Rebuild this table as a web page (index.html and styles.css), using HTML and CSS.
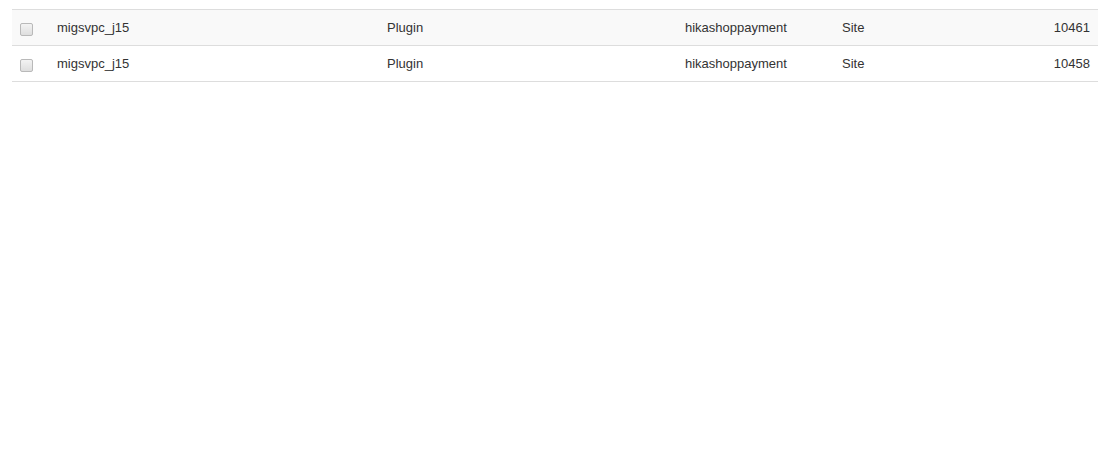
FILE: index.html
```html
<!DOCTYPE html>
<html>
<head>
<meta charset="utf-8">
<link rel="stylesheet" href="styles.css">
</head>
<body>
<div class="wrap">
<table class="list">
<colgroup>
<col class="c-check"><col class="c-name"><col class="c-type"><col class="c-folder"><col class="c-client"><col class="c-id">
</colgroup>
<tbody>
<tr class="ghost"><td><input type="checkbox" class="cb"></td><td></td><td></td><td></td><td></td><td></td></tr>
<tr class="odd"><td><input type="checkbox" class="cb"></td><td>migsvpc_j15</td><td>Plugin</td><td>hikashoppayment</td><td>Site</td><td class="num">10461</td></tr>
<tr><td><input type="checkbox" class="cb"></td><td>migsvpc_j15</td><td>Plugin</td><td>hikashoppayment</td><td>Site</td><td class="num">10458</td></tr>
</tbody>
</table>
</div>
</body>
</html>
```
FILE: styles.css
```css
html, body { margin: 0; padding: 0; background: #fff; }
body { font-family: "Liberation Sans", Arial, sans-serif; font-size: 13px; color: #333; }
.wrap { padding: 0 21px 0 12px; margin-top: -26px; }
.list { width: 1086px; border-collapse: collapse; table-layout: fixed; }
.c-check { width: 37px; }
.c-name { width: 330px; }
.c-type { width: 298px; }
.c-folder { width: 157px; }
.c-client { width: 150px; }
.c-id { width: 114px; }
.list td { padding: 8px; line-height: 19px; border-bottom: 1px solid #ddd; vertical-align: top; white-space: nowrap; }
.list tr.ghost td { height: 19px; }
.list tr.odd td { background: #f9f9f9; }
.list td.num { text-align: right; }
.cb { -webkit-appearance: none; appearance: none; display: block; margin: 5px 0 0 0; width: 13px; height: 13px; border: 1px solid #b9b9b9; border-radius: 2px; background: linear-gradient(#f3f3f3, #dedede); box-sizing: border-box; }
```
